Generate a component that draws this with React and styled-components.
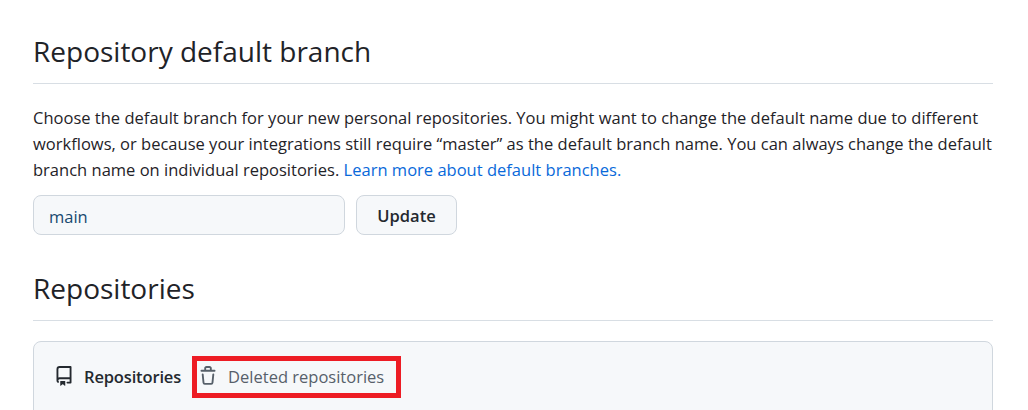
import React from "react";
import styled, { createGlobalStyle } from "styled-components";

const Global = createGlobalStyle`
  html, body { margin: 0; padding: 0; background: #fff; }
  body { font-family: "Open Sans", "Noto Sans", sans-serif; color: #1f2328; }
`;
const Page = styled.div`
  width: 1028px; height: 410px; overflow: hidden; box-sizing: border-box;
  padding: 28px 35px 0 33px;
`;
const Heading = styled.h2`
  margin: 0; font-size: 28px; font-weight: 400; line-height: 47px; height: 55px;
  border-bottom: 1px solid #d8dee4; color: #1f2328;
`;
const Para = styled.p`
  margin: 21px 0 12px; font-size: 16.5px; line-height: 26px; letter-spacing: 0.01px; white-space: nowrap;
`;
const Link = styled.a`color: #0969da; text-decoration: none;`;
const Row = styled.div`display: flex; gap: 11px; margin-bottom: 30px;`;
const Input = styled.div`
  width: 312px; height: 40px; box-sizing: border-box; border: 1px solid #d0d7de; border-radius: 8px;
  background: #f6f8fa; padding: 0 15px; font-size: 16.5px; line-height: 42px; color: #17496f;
`;
const Button = styled.button`
  width: 101px; height: 40px; border: 1px solid #d0d7de; border-radius: 8px; background: #f6f8fa;
  font: 600 16.5px "Open Sans", sans-serif; color: #24292f; padding: 0;
`;
const Panel = styled.div`
  margin-top: 20px; height: 80px; border: 1px solid #d0d7de; border-radius: 8px 8px 0 0; background: #f6f8fa;
  display: flex; align-items: flex-start; padding: 19px 20px; box-sizing: border-box; position: relative;
`;
const Tab = styled.div`
  display: flex; align-items: center; gap: 10px; font-size: 16.5px; height: 30px;
  font-weight: ${p => (p.$active ? 600 : 400)}; color: ${p => (p.$active ? "#24292f" : "#57606a")};
  letter-spacing: ${p => (p.$active ? "-0.15px" : "0")};
  margin-right: 17px;
`;
const Highlight = styled.div`
  position: absolute; left: 158px; top: 14px; width: 209px; height: 42px; box-sizing: border-box;
  border: 5px solid #ed1c24;
`;
const Repo = () => (
  <svg width="20" height="20" viewBox="0 0 16 16" fill="#24292f"><path d="M2 2.5A2.5 2.5 0 0 1 4.5 0h8.75a.75.75 0 0 1 .75.75v12.5a.75.75 0 0 1-.75.75h-2.5a.75.75 0 0 1 0-1.5h1.75v-2h-8a1 1 0 0 0-.714 1.7.75.75 0 1 1-1.072 1.05A2.495 2.495 0 0 1 2 11.5Zm10.5-1h-8a1 1 0 0 0-1 1v6.708A2.486 2.486 0 0 1 4.5 9h8ZM5 12.25a.25.25 0 0 1 .25-.25h3.5a.25.25 0 0 1 .25.25v3.25a.25.25 0 0 1-.4.2l-1.45-1.087a.249.249 0 0 0-.3 0L5.4 15.7a.25.25 0 0 1-.4-.2Z"/></svg>
);
const Trash = () => (
  <svg width="20" height="20" viewBox="0 0 16 16" fill="#57606a"><path d="M11 1.75V3h2.25a.75.75 0 0 1 0 1.5H2.75a.75.75 0 0 1 0-1.5H5V1.75C5 .784 5.784 0 6.75 0h2.5C10.216 0 11 .784 11 1.75ZM4.496 6.675l.66 6.6a.25.25 0 0 0 .249.225h5.19a.25.25 0 0 0 .249-.225l.66-6.6a.75.75 0 0 1 1.492.149l-.66 6.6A1.748 1.748 0 0 1 10.595 15h-5.19a1.75 1.75 0 0 1-1.741-1.575l-.66-6.6a.75.75 0 1 1 1.492-.15ZM6.5 1.75V3h3V1.75a.25.25 0 0 0-.25-.25h-2.5a.25.25 0 0 0-.25.25Z"/></svg>
);
export default function App() {
  return (
    <Page>
      <Global />
      <Heading>Repository default branch</Heading>
      <Para>
        Choose the default branch for your new personal repositories. You might want to change the default name due to different<br />
        workflows, or because your integrations still require “master” as the default branch name. You can always change the default<br />
        branch name on individual repositories. <Link>Learn more about default branches.</Link>
      </Para>
      <Row>
        <Input>main</Input>
        <Button>Update</Button>
      </Row>
      <Heading>Repositories</Heading>
      <Panel>
        <Tab $active><Repo />Repositories</Tab>
        <Tab><Trash />Deleted repositories</Tab>
        <Highlight />
      </Panel>
    </Page>
  );
}
